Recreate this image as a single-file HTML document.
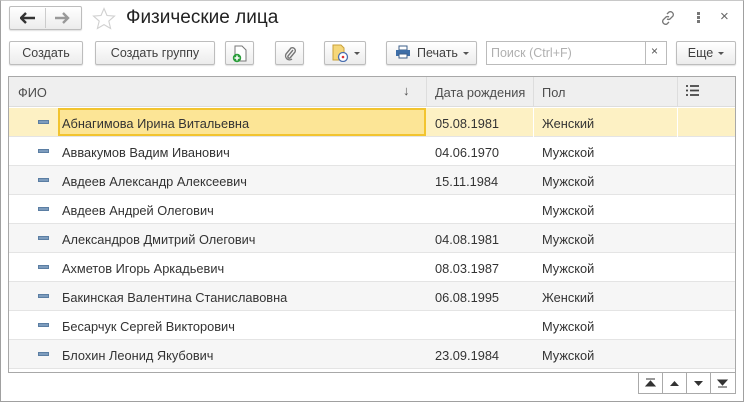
<!DOCTYPE html>
<html><head><meta charset="utf-8"><style>
*{box-sizing:border-box;margin:0;padding:0}
body{width:744px;height:402px;background:#fff;font-family:"Liberation Sans",Arial,sans-serif;font-size:12px;color:#333;position:relative;overflow:hidden}
.win{position:absolute;left:0;top:0;width:744px;height:402px;border:1px solid #a0a0a0;border-top-color:#c8c8c8}
.a{position:absolute}
.btn{position:absolute;height:24px;border:1px solid #bdbdbd;border-radius:2px;background:linear-gradient(#fff,#ececec);box-shadow:0 1px 1px rgba(0,0,0,.12);font-size:12.5px;color:#404040;line-height:22px;text-align:center;white-space:nowrap}
.dd{display:inline-block;width:0;height:0;border-left:3px solid transparent;border-right:3px solid transparent;border-top:3px solid #555;vertical-align:middle;margin-left:5px}
.grid{position:absolute;left:8px;top:76px;width:728px;height:297px;border:1px solid #a8a8a8;overflow:hidden}
.hdr{position:absolute;left:0;top:0;width:726px;height:30px;background:#efefef;border-bottom:1px solid #ddd;color:#4d4d4d;font-size:12.8px}
.row{position:absolute;left:0;width:726px;height:29px;border-bottom:1px solid #e4e4e4;font-size:12.8px;color:#333}
.row span{position:absolute;top:8px}
.ic{position:absolute;left:29px;top:12px;width:11px;height:4px;background:#7d9cbd;border:1px solid #5b7ea3}
.vl{position:absolute;top:0;width:1px;height:30px;background:#ddd}
.nb{position:absolute;top:372px;width:25px;height:22px;border:1px solid #aaa;background:#fff}
</style></head><body>
<div class="win"></div>
<div class="btn" style="left:9px;top:6px;width:73px;height:24px"></div>
<div class="a" style="left:45px;top:8px;width:1px;height:20px;background:#ccc"></div>
<svg class="a" style="left:20px;top:12px" width="16" height="12"><path d="M1 6h14M6 1L1 6l5 5" stroke="#333" stroke-width="2.4" fill="none"/></svg>
<svg class="a" style="left:54px;top:12px" width="16" height="12"><path d="M1 6h13M9 1l5 5-5 5" stroke="#999" stroke-width="2.4" fill="none"/></svg>
<svg class="a" style="left:92px;top:7px" width="24" height="23"><path d="M12 1.5l3 7 7.5.6-5.7 5 1.8 7.4L12 17.6 5.4 21.5l1.8-7.4-5.7-5 7.5-.6z" fill="none" stroke="#d0d0d0" stroke-width="1.1"/></svg>
<div class="a" style="left:126px;top:7px;font-size:19px;color:#222">Физические лица</div>
<svg class="a" style="left:660px;top:10px" width="16" height="16"><path d="M7 4l2-2a3 3 0 014 4l-3 3a3 3 0 01-3 0M9 12l-2 2a3 3 0 01-4-4l3-3a3 3 0 013 0" stroke="#777" stroke-width="1.3" fill="none"/></svg>
<div class="a" style="left:697px;top:12px;width:3px;height:3px;background:#777;box-shadow:0 4px #777,0 8px #777"></div>
<div class="a" style="left:720px;top:8px;font-size:15px;color:#666">×</div>
<div class="btn" style="left:9px;top:41px;width:74px">Создать</div>
<div class="btn" style="left:95px;top:41px;width:120px">Создать группу</div>
<div class="btn" style="left:225px;top:41px;width:29px"><svg width="16" height="18" style="margin-top:3px"><path d="M3 1h7l4 4v11H3z" fill="#fff" stroke="#777"/><circle cx="5" cy="13" r="4.2" fill="#2a9d3a"/><path d="M5 10.5v5M2.5 13h5" stroke="#fff" stroke-width="1.5"/></svg></div>
<div class="btn" style="left:275px;top:41px;width:29px"><svg width="14" height="16" style="margin-top:4px"><path d="M10 4L5 10a1.5 1.5 0 002 2l5-6a3 3 0 00-4-4L3 8a4 4 0 006 5" stroke="#777" stroke-width="1.4" fill="none"/></svg></div>
<div class="btn" style="left:324px;top:41px;width:42px;display:flex;align-items:center;justify-content:center"><svg width="18" height="18"><path d="M2 1h8l3 3v12H2z" fill="#f5d77a" stroke="#c9a13a"/><circle cx="12" cy="13" r="4.5" fill="#fff" stroke="#4a6fb0" stroke-width="1.3"/><circle cx="12" cy="13" r="1.3" fill="#d33"/></svg><span class="dd"></span></div>
<div class="btn" style="left:386px;top:41px;width:91px;text-align:left;padding-left:8px"><svg width="16" height="14" style="vertical-align:-2px;margin-right:6px"><rect x="4" y="1" width="8" height="4" fill="#fff" stroke="#3d5f8a"/><rect x="1" y="5" width="14" height="6" fill="#3d6ea8"/><rect x="4" y="9" width="8" height="4" fill="#fff" stroke="#3d5f8a"/></svg>Печать<span class="dd"></span></div>
<div class="a" style="left:486px;top:41px;width:181px;height:24px;border:1px solid #bbb;background:#fff"></div>
<div class="a" style="left:645px;top:42px;width:1px;height:22px;background:#bbb"></div>
<div class="a" style="left:491px;top:46px;font-size:12.5px;color:#b0b0b0">Поиск (Ctrl+F)</div>
<div class="a" style="left:651px;top:44px;font-size:12px;color:#555">×</div>
<div class="btn" style="left:676px;top:41px;width:60px">Еще<span class="dd"></span></div>
<div class="grid">
<div class="hdr">
<span class="a" style="left:9px;top:8px">ФИО</span>
<span class="a" style="left:394px;top:6px;font-size:13px">↓</span>
<div class="vl" style="left:417px"></div>
<span class="a" style="left:426px;top:8px">Дата рождения</span>
<div class="vl" style="left:524px"></div>
<span class="a" style="left:533px;top:8px">Пол</span>
<div class="vl" style="left:668px"></div>
<svg class="a" style="left:677px;top:8px" width="14" height="12"><path d="M0 1h2M0 5.5h2M0 10h2M4 1h9M4 5.5h9M4 10h9" stroke="#444" stroke-width="1.8"/></svg>
</div>
<div class="row" style="top:31px;background:#fdf1c4"><div class="a" style="left:49px;top:0;width:368px;height:28px;background:#fce596;border:2px solid #f2c42f"></div><div class="ic"></div><span style="left:53px">Абнагимова Ирина Витальевна</span><span style="left:426px">05.08.1981</span><span style="left:533px">Женский</span><div class="a" style="left:524px;top:0;width:1px;height:29px;background:#fff"></div><div class="a" style="left:668px;top:0;width:1px;height:29px;background:#fff"></div></div>
<div class="row" style="top:60px;background:#fff"><div class="ic"></div><span style="left:53px">Аввакумов Вадим Иванович</span><span style="left:426px">04.06.1970</span><span style="left:533px">Мужской</span></div>
<div class="row" style="top:89px;background:#f6f6f6"><div class="ic"></div><span style="left:53px">Авдеев Александр Алексеевич</span><span style="left:426px">15.11.1984</span><span style="left:533px">Мужской</span></div>
<div class="row" style="top:118px;background:#fff"><div class="ic"></div><span style="left:53px">Авдеев Андрей Олегович</span><span style="left:533px">Мужской</span></div>
<div class="row" style="top:147px;background:#f6f6f6"><div class="ic"></div><span style="left:53px">Александров Дмитрий Олегович</span><span style="left:426px">04.08.1981</span><span style="left:533px">Мужской</span></div>
<div class="row" style="top:176px;background:#fff"><div class="ic"></div><span style="left:53px">Ахметов Игорь Аркадьевич</span><span style="left:426px">08.03.1987</span><span style="left:533px">Мужской</span></div>
<div class="row" style="top:205px;background:#f6f6f6"><div class="ic"></div><span style="left:53px">Бакинская Валентина Станиславовна</span><span style="left:426px">06.08.1995</span><span style="left:533px">Женский</span></div>
<div class="row" style="top:234px;background:#fff"><div class="ic"></div><span style="left:53px">Бесарчук Сергей Викторович</span><span style="left:533px">Мужской</span></div>
<div class="row" style="top:263px;background:#f6f6f6"><div class="ic"></div><span style="left:53px">Блохин Леонид Якубович</span><span style="left:426px">23.09.1984</span><span style="left:533px">Мужской</span></div>
</div>
<div class="nb" style="left:638px"><svg width="23" height="20"><path d="M7 6h9M7 13h9l-4.5-5z" stroke="#333" fill="#333"/></svg></div>
<div class="nb" style="left:662px"><svg width="23" height="20"><path d="M7 13h9l-4.5-5z" fill="#333"/></svg></div>
<div class="nb" style="left:686px"><svg width="23" height="20"><path d="M7 8h9l-4.5 5z" fill="#333"/></svg></div>
<div class="nb" style="left:710px;width:26px"><svg width="23" height="20"><path d="M7 7h9l-4.5 5zM7 14h9" stroke="#333" fill="#333"/></svg></div>
</body></html>
